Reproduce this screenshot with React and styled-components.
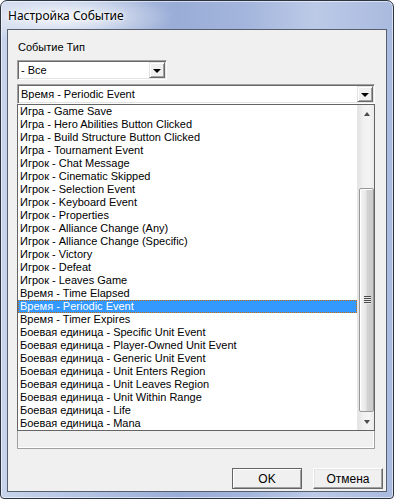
import React from 'react'
import styled, { createGlobalStyle } from 'styled-components'

const GlobalStyle = createGlobalStyle`
  html, body {
    margin: 0;
    padding: 0;
    background: #ffffff;
  }
  * {
    box-sizing: border-box;
  }
`

const Window = styled.div`
  width: 394px;
  height: 499px;
  display: flex;
  flex-direction: column;
  padding: 0 6px 6px 6px;
  border: 1px solid #2c3441;
  border-radius: 7px 7px 4px 4px;
  box-shadow: inset 0 0 0 1px rgba(255, 255, 255, 0.55);
  background:
    radial-gradient(ellipse 110px 26px at 62px 16px, rgba(255, 255, 255, 0.85), rgba(255, 255, 255, 0) 100%),
    linear-gradient(90deg, #c7d4eb 0%, #b3c3e3 22%, #9aadd7 45%, #a3b5dc 62%, #bccae7 80%, #a9badf 100%);
  font-family: "Liberation Sans", Arial, sans-serif;
  overflow: hidden;
`

const TitleBar = styled.div`
  height: 28px;
  flex: none;
  display: flex;
  align-items: center;
  padding-left: 1px;
  font-family: "Noto Sans", "Open Sans", sans-serif;
  font-size: 12px;
  color: #000;
  text-shadow: 0 0 6px #fff, 0 0 3px #fff;
`

const Client = styled.div`
  flex: 1;
  display: flex;
  flex-direction: column;
  background: #f0f0f0;
  border: 1px solid #555f6e;
  padding: 11px 0 2px 9px;
  font-size: 11px;
  color: #000;
`

const Label = styled.div`
  height: 13px;
  line-height: 13px;
  padding-left: 1px;
  margin-bottom: 6px;
`

const Combo = styled.div`
  width: ${p => p.width}px;
  height: 20px;
  display: flex;
  align-items: center;
  background: #fff;
  border: 1px solid;
  border-color: #a0a0a0 #fff #fff #a0a0a0;
  box-shadow: inset 1px 1px 0 #696969, inset -1px -1px 0 #e3e3e3;
  padding: 0 1px 0 3px;
  margin-bottom: ${p => p.gap || 0}px;
`

const ComboText = styled.span`
  flex: 1;
  line-height: 13px;
  white-space: nowrap;
`

const DropButton = styled.div`
  width: 16px;
  height: 16px;
  display: flex;
  align-items: center;
  justify-content: center;
  background: #f0f0f0;
  border: 1px solid;
  border-color: #e3e3e3 #696969 #696969 #e3e3e3;
  box-shadow: inset 1px 1px 0 #fff, inset -1px -1px 0 #a0a0a0;

  &::after {
    content: '';
    width: 0;
    height: 0;
    border-left: 4px solid transparent;
    border-right: 4px solid transparent;
    border-top: 4px solid #000;
    margin-top: 1px;
  }
`

const Panel = styled.div`
  width: 358px;
  height: 345px;
  display: flex;
  flex-direction: column;
  border: 1px solid #a0a0a0;
  border-top: none;
  box-shadow: inset -1px -1px 0 #fff;
`

const ListBox = styled.div`
  height: 327px;
  margin: 0 -1px;
  display: flex;
  background: #fff;
  border: 1px solid #646464;
`

const Items = styled.div`
  flex: 1;
  display: flex;
  flex-direction: column;
`

const Item = styled.div`
  position: relative;
  height: 13px;
  line-height: 13px;
  padding-left: 2px;
  white-space: nowrap;
  color: ${p => (p.selected ? '#fff' : '#000')};
  background: ${p => (p.selected ? '#3399ff' : 'transparent')};

  &::after {
    content: '';
    display: ${p => (p.selected ? 'block' : 'none')};
    position: absolute;
    inset: 0;
    background:
      repeating-linear-gradient(90deg, #cc6600 0 1px, transparent 1px 2px) top / 100% 1px no-repeat,
      repeating-linear-gradient(90deg, #cc6600 0 1px, transparent 1px 2px) bottom / 100% 1px no-repeat,
      repeating-linear-gradient(180deg, #cc6600 0 1px, transparent 1px 2px) left / 1px 100% no-repeat,
      repeating-linear-gradient(180deg, #cc6600 0 1px, transparent 1px 2px) right / 1px 100% no-repeat;
  }
`

const ScrollBar = styled.div`
  width: 17px;
  display: flex;
  flex-direction: column;
  background: linear-gradient(90deg, #e3e3e3 0%, #f0f0f0 30%, #f4f4f4 70%, #eaeaea 100%);
  border-left: 1px solid #e6e6e6;
`

const Arrow = styled.div`
  height: 17px;
  flex: none;
  display: flex;
  align-items: center;
  justify-content: center;

  &::after {
    content: '';
    width: 0;
    height: 0;
    border-left: 3.5px solid transparent;
    border-right: 3.5px solid transparent;
    ${p => (p.up ? 'border-bottom: 4px solid #4d4d4d;' : 'border-top: 4px solid #4d4d4d;')}
    margin-left: 1px;
  }
`

const Track = styled.div`
  flex: 1;
  display: flex;
  flex-direction: column;
  padding: 66px 0 0 1px;
`

const Thumb = styled.div`
  height: 224px;
  width: 15px;
  display: flex;
  align-items: center;
  justify-content: center;
  border: 1px solid #979797;
  border-radius: 2px;
  background: linear-gradient(90deg, #f4f4f4 0%, #e8e8e8 45%, #d2d2d2 55%, #cccccc 100%);
  box-shadow: inset 1px 1px 0 #fff;
`

const Grip = styled.div`
  width: 7px;
  height: 8px;
  background: repeating-linear-gradient(180deg, #4a4a4a 0 1px, #e8e8e8 1px 2px);
  margin-left: 1px;
`

const Footer = styled.div`
  margin-top: auto;
  display: flex;
  justify-content: flex-end;
  gap: 11px;
  padding-right: 3px;
`

const Button = styled.div`
  width: 70px;
  height: 21px;
  display: flex;
  align-items: center;
  justify-content: center;
  background: #f0f0f0;
  border: 1px solid;
  border-color: ${p => (p.primary ? '#646464' : '#fff #696969 #696969 #fff')};
  box-shadow: ${p =>
    p.primary
      ? 'inset 1px 1px 0 #fff, inset -1px -1px 0 #a0a0a0'
      : 'inset -1px -1px 0 #a0a0a0, inset 1px 1px 0 #e3e3e3'};
  font-size: 12px;
`

const events = [
  'Игра - Game Save',
  'Игра - Hero Abilities Button Clicked',
  'Игра - Build Structure Button Clicked',
  'Игра - Tournament Event',
  'Игрок - Chat Message',
  'Игрок - Cinematic Skipped',
  'Игрок - Selection Event',
  'Игрок - Keyboard Event',
  'Игрок - Properties',
  'Игрок - Alliance Change (Any)',
  'Игрок - Alliance Change (Specific)',
  'Игрок - Victory',
  'Игрок - Defeat',
  'Игрок - Leaves Game',
  'Время - Time Elapsed',
  'Время - Periodic Event',
  'Время - Timer Expires',
  'Боевая единица - Specific Unit Event',
  'Боевая единица - Player-Owned Unit Event',
  'Боевая единица - Generic Unit Event',
  'Боевая единица - Unit Enters Region',
  'Боевая единица - Unit Leaves Region',
  'Боевая единица - Unit Within Range',
  'Боевая единица - Life',
  'Боевая единица - Mana',
]

const selected = 'Время - Periodic Event'

export default function App() {
  return (
    <>
      <GlobalStyle />
      <Window>
        <TitleBar>Настройка Событие</TitleBar>
        <Client>
          <Label>Событие Тип</Label>
          <Combo width={150} gap={4}>
            <ComboText>- Все</ComboText>
            <DropButton />
          </Combo>
          <Combo width={358}>
            <ComboText>{selected}</ComboText>
            <DropButton />
          </Combo>
          <Panel>
            <ListBox>
              <Items>
                {events.map(e => (
                  <Item key={e} selected={e === selected}>{e}</Item>
                ))}
              </Items>
              <ScrollBar>
                <Arrow up />
                <Track>
                  <Thumb>
                    <Grip />
                  </Thumb>
                </Track>
                <Arrow />
              </ScrollBar>
            </ListBox>
          </Panel>
          <Footer>
            <Button primary>OK</Button>
            <Button>Отмена</Button>
          </Footer>
        </Client>
      </Window>
    </>
  )
}
